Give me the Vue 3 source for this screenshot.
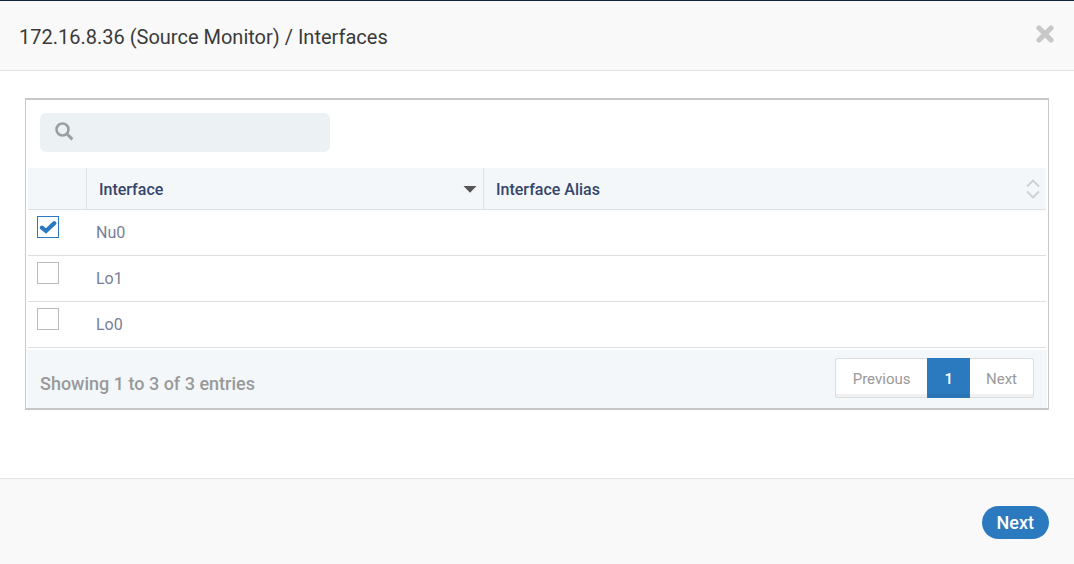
<script setup>
import { computed, ref } from 'vue'

const query = ref('')
const rows = ref([
  { id: 'nu0', name: 'Nu0', alias: '', checked: true },
  { id: 'lo1', name: 'Lo1', alias: '', checked: false },
  { id: 'lo0', name: 'Lo0', alias: '', checked: false },
])
const visibleRows = computed(() =>
  rows.value.filter((row) => row.name.toLowerCase().includes(query.value.toLowerCase())),
)
</script>

<template>
  <div class="dialog">
    <header class="dialog-header">
      <h1 class="title">172.16.8.36 (Source Monitor) / Interfaces</h1>
      <button class="close" type="button" aria-label="Close">
        <svg width="18" height="18" viewBox="0 0 18 18">
          <path d="M3 3 15 15M15 3 3 15" fill="none" stroke="#c8c8c8" stroke-width="5.2" stroke-linecap="round" />
        </svg>
      </button>
    </header>

    <main class="dialog-body">
      <section class="panel">
        <label class="search">
          <svg class="search-icon" width="19" height="19" viewBox="0 0 19 19">
            <circle cx="7.5" cy="7.5" r="6" fill="none" stroke="#9c9f9f" stroke-width="2.6" />
            <path d="M11.8 11.8 17.4 17.4" fill="none" stroke="#9c9f9f" stroke-width="3" />
          </svg>
          <input v-model="query" class="search-input" type="text" aria-label="Search interfaces" />
        </label>

        <table class="grid">
          <thead>
            <tr>
              <th class="col-check"></th>
              <th class="col-name" aria-sort="descending">
                <div class="head">
                  <span class="head-text">Interface</span>
                  <svg width="14" height="8" viewBox="0 0 14 8"><path d="M0.5 1h13L7 7.7z" fill="#555" /></svg>
                </div>
              </th>
              <th>
                <div class="head">
                  <span class="head-text">Interface Alias</span>
                  <svg width="14" height="20" viewBox="0 0 14 20">
                    <path d="M1 7.5 7 1.5l6 6M1 12.5l6 6 6-6" fill="none" stroke="#d0d0d0" stroke-width="1.8" />
                  </svg>
                </div>
              </th>
            </tr>
          </thead>
          <tbody>
            <tr v-for="row in visibleRows" :key="row.id">
              <td class="cell-check">
                <label class="check">
                  <input v-model="row.checked" class="box" type="checkbox" :aria-label="row.name" />
                  <svg v-if="row.checked" class="tick" width="18" height="14" viewBox="0 0 18 14">
                    <path d="M2.9 7.6 7 11 15.2 3.2" fill="none" stroke="#2b79be" stroke-width="4.2" stroke-linecap="round" stroke-linejoin="miter" />
                  </svg>
                </label>
              </td>
              <td class="cell-name">{{ row.name }}</td>
              <td>{{ row.alias }}</td>
            </tr>
          </tbody>
        </table>

        <div class="panel-footer">
          <p class="summary">Showing 1 to 3 of 3 entries</p>
          <nav class="pager" aria-label="Pages">
            <button class="page page-first" type="button">Previous</button>
            <button class="page page-current" type="button" aria-current="page">1</button>
            <button class="page page-last" type="button">Next</button>
          </nav>
        </div>
      </section>
    </main>

    <footer class="dialog-footer">
      <button class="next" type="button">Next</button>
    </footer>
  </div>
</template>

<style>
body {
  margin: 0;
  background: #fff;
}
</style>

<style scoped>
.dialog {
  display: flex;
  flex-direction: column;
  box-sizing: border-box;
  min-height: 100vh;
  border-top: 1px solid #0f2744;
  background: #fff;
  font-family: Roboto, "Liberation Sans", sans-serif;
}
button,
input {
  margin: 0;
  font-family: inherit;
}
.dialog-header {
  display: flex;
  align-items: flex-start;
  justify-content: space-between;
  padding: 24px 20px 20px 19px;
  border-bottom: 1px solid #e3e3e3;
  background: #f9f9f9;
}
.title {
  margin: 0;
  color: #3a3a3a;
  font-size: 20px;
  font-weight: 400;
  line-height: 25px;
}
.close {
  display: block;
  padding: 0;
  border: 0;
  background: none;
  cursor: pointer;
}
.close svg,
.head svg,
.search-icon {
  display: block;
  flex: none;
}
.dialog-body {
  flex: 1;
  padding: 27px 25px 0;
}
.panel {
  border: 1px solid #c8c8c8;
  border-width: 2px 1px;
}
.search {
  display: flex;
  align-items: center;
  box-sizing: border-box;
  width: 290px;
  height: 39px;
  margin: 13px 14px 16px;
  padding: 0 15px 2px;
  border-radius: 6px;
  background: #ecf1f4;
}
.search-input {
  flex: 1;
  min-width: 0;
  padding: 0 8px;
  border: 0;
  outline: 0;
  background: transparent;
  color: #555;
  font-size: 16px;
}
.grid {
  width: calc(100% - 4px);
  margin: 0 2px;
  border-collapse: separate;
  border-spacing: 0;
  table-layout: fixed;
}
.grid th {
  height: 41px;
  padding: 0 6px 0 12px;
  border-bottom: 1px solid #dce1e5;
  background: #f3f7fa;
  color: #36456b;
  font-size: 16px;
  font-weight: 500;
  text-align: left;
}
.grid th + th {
  border-left: 1px solid #dce1e5;
}
.grid .col-check {
  width: 58px;
  padding: 0;
}
.grid .col-name {
  width: 39%;
  box-sizing: border-box;
}
.head {
  display: flex;
  align-items: center;
  justify-content: space-between;
}
.head-text {
  padding-top: 2px;
}
.grid td {
  height: 45px;
  padding: 0 10px;
  border-bottom: 1px solid #dcdfe2;
  color: #777e98;
  font-size: 16px;
}
.grid .cell-check {
  vertical-align: top;
  padding: 6px 9px 0;
  height: 39px;
}
.check {
  display: grid;
  width: 22px;
  height: 22px;
}
.box {
  grid-area: 1 / 1;
  appearance: none;
  box-sizing: border-box;
  width: 22px;
  height: 22px;
  border: 1px solid #bbb;
  background: #fff;
}
.box:checked {
  border-color: #2b79be;
}
.tick {
  grid-area: 1 / 1;
  place-self: center;
  pointer-events: none;
}
.panel-footer {
  display: flex;
  align-items: center;
  justify-content: space-between;
  margin: 2px 1px 0;
  padding: 8px 13px 10px;
  background: #f3f7fa;
}
.summary {
  margin: 0;
  padding-top: 12px;
  color: #999;
  font-size: 18px;
  font-weight: 500;
  line-height: 22px;
}
.pager {
  display: flex;
}
.page {
  box-sizing: border-box;
  height: 40px;
  padding: 2px 16px 0;
  border: 1px solid #ddd;
  background: #fff;
  box-shadow: inset 0 -3px 0 #f1f1f1;
  color: #999;
  font-size: 15px;
}
.page-first {
  padding: 2px 17px 0;
  border-right: 0;
  border-radius: 3px 0 0 3px;
}
.page-current {
  border-color: #2b79be;
  background: #2b79be;
  box-shadow: inset 0 -3px 0 #2973b5;
  color: #fff;
  font-weight: 500;
}
.page-last {
  border-left: 0;
  border-radius: 0 3px 3px 0;
}
.dialog-footer {
  display: flex;
  justify-content: flex-end;
  padding: 27px 25px 25px;
  border-top: 1px solid #e3e3e3;
  background: #f9f9f9;
}
.next {
  height: 33px;
  padding: 0 15px;
  border: 0;
  border-radius: 17px;
  background: #2b79be;
  color: #fff;
  font-size: 18px;
  font-weight: 500;
}
</style>
